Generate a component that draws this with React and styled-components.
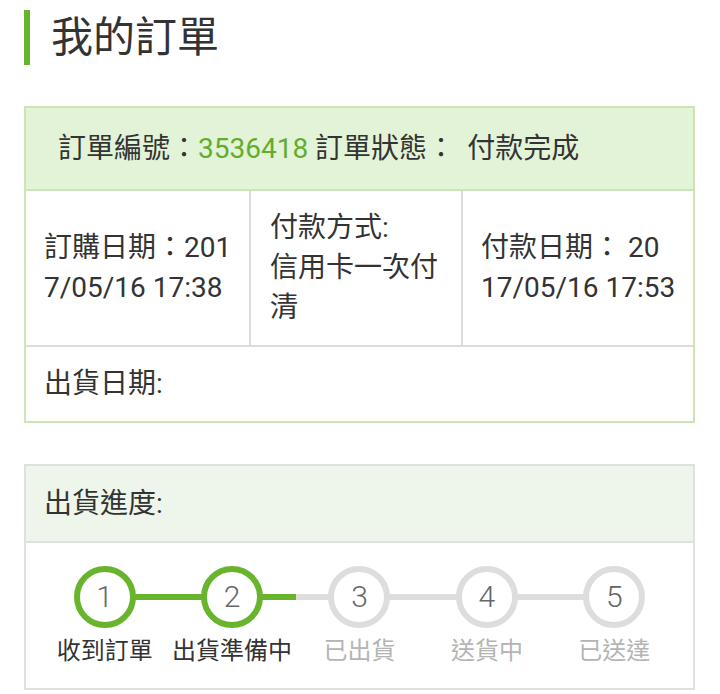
import React from 'react';
import styled, { createGlobalStyle } from 'styled-components';

const GREEN = '#68b42c';

const Global = createGlobalStyle`
  html, body { margin: 0; padding: 0; background: #fff; }
  body {
    font-family: Roboto, "Noto Sans CJK TC", "Noto Sans", sans-serif;
    color: #333;
  }
`;

const Page = styled.div`
  width: 720px;
  padding: 10px 25px 0 24px;
  box-sizing: border-box;
  display: flex;
  flex-direction: column;
`;

const Title = styled.h1`
  margin: 0;
  height: 55px;
  display: flex;
  align-items: center;
  border-left: 6px solid ${GREEN};
  padding-left: 21px;
  font-size: 42px;
  font-weight: 400;
  line-height: 55px;
  color: #333;
`;

const Card = styled.section`
  margin-top: 41px;
  border: 2px solid ${p => (p.$tone === 'green' ? '#cae6b5' : '#e0e0e0')};
  box-sizing: border-box;
  width: 671px;
`;

const CardHeader = styled.div`
  display: flex;
  align-items: center;
  height: ${p => p.$h}px;
  padding-left: ${p => p.$pad}px;
  background: ${p => p.$bg};
  border-bottom: 2px solid ${p => p.$line};
  font-size: 28px;
  line-height: 40px;
  white-space: pre;
`;

const OrderNo = styled.span`
  color: #62ad2e;
`;

const Gap = styled.span`
  display: inline-block;
  width: ${p => p.$w}px;
`;

const InfoRow = styled.div`
  display: grid;
  grid-template-columns: 223px 210px 1fr;
  column-gap: 2px;
  background: #dcdcdc;
  border-bottom: 2px solid #dcdcdc;
`;

const InfoCell = styled.div`
  background: #fff;
  height: 154px;
  display: flex;
  align-items: center;
  padding: 0 12px 0 ${p => p.$pl}px;
  font-size: 28px;
  line-height: 40px;
  white-space: pre-line;
  word-break: break-all;
`;

const ShipRow = styled.div`
  height: 74px;
  display: flex;
  align-items: center;
  padding-left: 18px;
  font-size: 28px;
  line-height: 40px;
`;

const Steps = styled.ol`
  list-style: none;
  margin: 0;
  padding: 23px 15px 22px;
  display: grid;
  grid-template-columns: repeat(5, 1fr);
`;

const Step = styled.li`
  position: relative;
  display: flex;
  flex-direction: column;
  align-items: center;

  &::before,
  &::after {
    content: '';
    position: absolute;
    top: 28px;
    height: 6px;
    width: 50%;
  }
  &::before {
    left: 0;
    background: ${p => p.$left || 'transparent'};
  }
  &::after {
    right: 0;
    background: ${p => p.$right || 'transparent'};
  }
`;

const Circle = styled.div`
  position: relative;
  z-index: 1;
  width: 62px;
  height: 62px;
  box-sizing: border-box;
  border-radius: 50%;
  border: 6px solid ${p => (p.$active ? GREEN : '#dddddd')};
  background: #fff;
  display: flex;
  align-items: center;
  justify-content: center;
  font-size: 30px;
  font-weight: 300;
  color: #666;
  line-height: 1;
`;

const StepLabel = styled.div`
  margin-top: 8px;
  font-size: 24px;
  line-height: 30px;
  white-space: nowrap;
  color: ${p => (p.$active ? '#333' : '#b4b4b4')};
`;

const steps = [
  { n: 1, label: '收到訂單', active: true, left: null, right: GREEN },
  { n: 2, label: '出貨準備中', active: true, left: GREEN, right: GREEN },
  { n: 3, label: '已出貨', active: false, left: '#dddddd', right: '#dddddd' },
  { n: 4, label: '送貨中', active: false, left: '#dddddd', right: '#dddddd' },
  { n: 5, label: '已送達', active: false, left: '#dddddd', right: null },
];

export default function App() {
  return (
    <>
      <Global />
      <Page>
        <Title>我的訂單</Title>

        <Card $tone="green">
          <CardHeader $h={81} $pad={32} $bg="#e3f3d8" $line="#cae6b5">
            訂單編號：<OrderNo>3536418</OrderNo> 訂單狀態：<Gap $w={12} />付款完成
          </CardHeader>
          <InfoRow>
            <InfoCell $pl={18}>{'訂購日期：201\n7/05/16 17:38'}</InfoCell>
            <InfoCell $pl={19}>{'付款方式:\n信用卡一次付\n清'}</InfoCell>
            <InfoCell $pl={18}>{'付款日期： 20\n17/05/16 17:53'}</InfoCell>
          </InfoRow>
          <ShipRow>出貨日期:</ShipRow>
        </Card>

        <Card $tone="gray">
          <CardHeader $h={75} $pad={18} $bg="#eef5eb" $line="#e0e0e0">
            出貨進度:
          </CardHeader>
          <Steps>
            {steps.map(s => (
              <Step key={s.n} $left={s.left} $right={s.right}>
                <Circle $active={s.active}>{s.n}</Circle>
                <StepLabel $active={s.active}>{s.label}</StepLabel>
              </Step>
            ))}
          </Steps>
        </Card>
      </Page>
    </>
  );
}
